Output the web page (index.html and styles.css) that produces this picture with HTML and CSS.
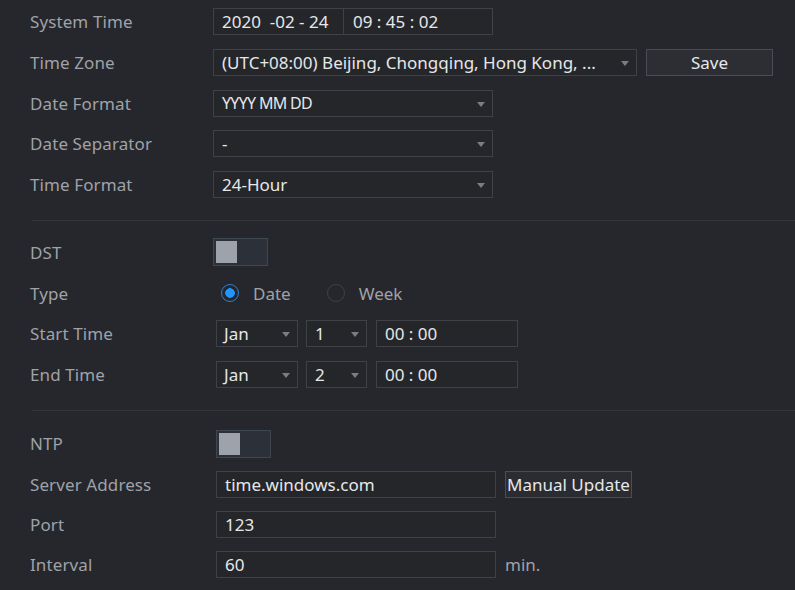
FILE: index.html
```html
<!DOCTYPE html>
<html lang="en">
<head>
    <meta charset="UTF-8">
    <meta name="viewport" content="width=device-width, initial-scale=1.0">
    <title>General - Date &amp; Time</title>
    <link rel="stylesheet" href="styles.css">
</head>
<body>
    <div class="panel">
        <!-- Date / time basics -->
        <section class="section first">
            <div class="row">
                <label class="label">System Time</label>
                <div class="box datetime">
                    <span class="dt-date">2020&nbsp;&nbsp;-02 - 24</span>
                    <span class="dt-time">09 : 45 : 02</span>
                </div>
            </div>
            <div class="row">
                <label class="label">Time Zone</label>
                <div class="box select tz">(UTC+08:00) Beijing, Chongqing, Hong Kong, ...<span class="arrow"></span></div>
                <button class="btn save">Save</button>
            </div>
            <div class="row">
                <label class="label">Date Format</label>
                <div class="box select wide narrow-text">YYYY MM DD<span class="arrow"></span></div>
            </div>
            <div class="row">
                <label class="label">Date Separator</label>
                <div class="box select wide">-<span class="arrow"></span></div>
            </div>
            <div class="row">
                <label class="label">Time Format</label>
                <div class="box select wide">24-Hour<span class="arrow"></span></div>
            </div>
        </section>

        <hr class="divider">

        <!-- Daylight saving -->
        <section class="section dst">
            <div class="row toggle-row">
                <label class="label">DST</label>
                <div class="toggle"><span class="knob"></span></div>
            </div>
            <div class="row">
                <label class="label">Type</label>
                <div class="radios">
                    <span class="radio checked"></span><span class="radio-text">Date</span>
                    <span class="radio"></span><span class="radio-text">Week</span>
                </div>
            </div>
            <div class="row">
                <label class="label">Start Time</label>
                <div class="shift">
                    <div class="box select month">Jan<span class="arrow"></span></div>
                    <div class="box select day">1<span class="arrow"></span></div>
                    <div class="box clock">00 : 00</div>
                </div>
            </div>
            <div class="row">
                <label class="label">End Time</label>
                <div class="shift">
                    <div class="box select month">Jan<span class="arrow"></span></div>
                    <div class="box select day">2<span class="arrow"></span></div>
                    <div class="box clock">00 : 00</div>
                </div>
            </div>
        </section>

        <hr class="divider second">

        <!-- Network time -->
        <section class="section ntp">
            <div class="row toggle-row">
                <label class="label">NTP</label>
                <div class="shift"><div class="toggle"><span class="knob"></span></div></div>
            </div>
            <div class="row">
                <label class="label">Server Address</label>
                <div class="shift">
                    <div class="box field">time.windows.com</div>
                    <button class="btn manual">Manual Update</button>
                </div>
            </div>
            <div class="row">
                <label class="label">Port</label>
                <div class="shift"><div class="box field">123</div></div>
            </div>
            <div class="row">
                <label class="label">Interval</label>
                <div class="shift">
                    <div class="box field">60</div>
                    <span class="unit">min.</span>
                </div>
            </div>
        </section>
    </div>
</body>
</html>
```

FILE: styles.css
```css
body {
    margin: 0;
    background-color: #26272c;
    font-family: "Noto Sans", "Open Sans", sans-serif;
    font-size: 17px;
    color: #e6e7e9;
    overflow: hidden;
}
.panel {
    width: 795px;
    height: 590px;
    padding-left: 30px;
    box-sizing: border-box;
}
.section {
    display: flex;
    flex-direction: column;
    gap: 13.75px;
}
.first {
    padding-top: 8px;
}
.row {
    display: flex;
    align-items: center;
    height: 27px;
}
.label {
    width: 183px;
    flex-shrink: 0;
    color: #9fa2a8;
    letter-spacing: 0.1px;
}
.divider {
    border: none;
    border-top: 1px solid #34363b;
    margin: 22px 0 0 2px;
    height: 0;
}
.divider.second {
    margin-top: 22px;
}
.dst {
    margin-top: 17px;
    gap: 13.5px;
}
.ntp {
    margin-top: 19px;
    gap: 13.3px;
}
.toggle-row {
    height: 28px;
}

/* Boxes (inputs and selects) */
.box {
    position: relative;
    height: 27px;
    box-sizing: border-box;
    border: 1px solid #3f4147;
    background: #24262a;
    padding-left: 8px;
    display: flex;
    align-items: center;
    white-space: nowrap;
}
.select {
    padding-right: 22px;
}
.arrow {
    position: absolute;
    right: 7px;
    top: 11px;
    width: 0;
    height: 0;
    border-left: 4px solid transparent;
    border-right: 4px solid transparent;
    border-top: 5px solid #7a7d85;
}
.datetime {
    width: 280px;
    padding-left: 0;
}
.dt-date {
    width: 130px;
    height: 100%;
    box-sizing: border-box;
    padding-left: 8px;
    display: flex;
    align-items: center;
    border-right: 1px solid #3f4147;
}
.dt-time {
    padding-left: 9px;
}
.tz {
    width: 424px;
}
.wide {
    width: 280px;
}
.narrow-text {
    letter-spacing: -0.7px;
    font-size: 16px;
}
.btn {
    height: 27px;
    box-sizing: border-box;
    border: 1px solid #4a4d53;
    background: #2c2e33;
    color: #e6e7e9;
    font-family: inherit;
    font-size: 17px;
    padding: 0;
}
.save {
    width: 127px;
    margin-left: 9px;
}

/* Toggles */
.toggle {
    width: 55px;
    height: 28px;
    box-sizing: border-box;
    border: 1px solid #3e4650;
    background: #2b3039;
    padding: 2px;
}
.knob {
    display: block;
    width: 21px;
    height: 22px;
    background: #9ea2aa;
}

/* Radios */
.radios {
    display: flex;
    align-items: center;
    margin-left: 8px;
}
.radio {
    width: 18px;
    height: 18px;
    box-sizing: border-box;
    border-radius: 50%;
    border: 1px solid #3d4045;
    margin-right: 14px;
}
.radio.checked {
    border: 1.5px solid #2f7fd0;
    background: radial-gradient(circle, #1f95ff 0 4.5px, transparent 5px);
}
.radio-text {
    color: #9fa2a8;
    margin-right: 36px;
}

/* Start / end time and NTP rows sit a touch further right */
.shift {
    display: flex;
    align-items: center;
    margin-left: 3px;
}
.month {
    width: 82px;
    padding-left: 7px;
}
.day {
    width: 61px;
    margin-left: 8px;
    padding-left: 8px;
}
.clock {
    width: 142px;
    margin-left: 9px;
}
.field {
    width: 280px;
}
.manual {
    width: 127px;
    margin-left: 9px;
    text-align: left;
    padding-left: 1px;
    background: #2a2c31;
}
.unit {
    margin-left: 9px;
    color: #9fa2a8;
}
```
